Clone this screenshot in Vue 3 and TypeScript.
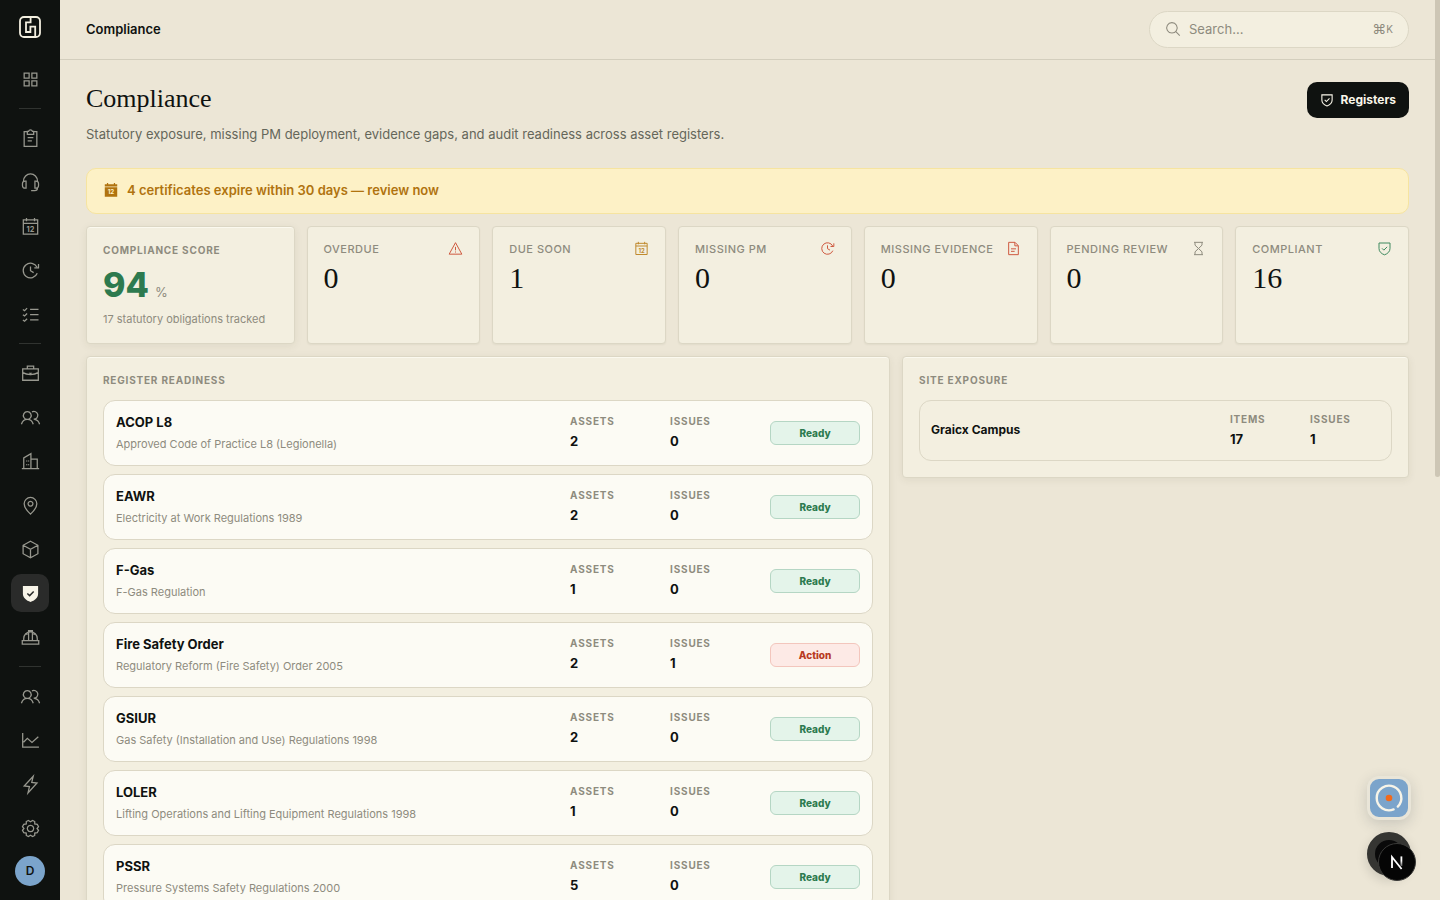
<script setup lang="ts">
interface Shape {
  d: string
  fill?: boolean
}
interface NavItem {
  icon: string
  label: string
  active?: boolean
}
interface Kpi {
  label: string
  value: number
  icon: string
  tone: string
}
interface Register {
  code: string
  name: string
  assets: number
  issues: number
}

const shapes: Record<string, Shape[]> = {
  grid: [{ d: 'M3 3h4.7v4.7H3zM10.3 3H15v4.7h-4.7zM3 10.3h4.7V15H3zM10.3 10.3H15V15h-4.7z' }],
  clipboard: [
    { d: 'M6 2.5H3V16.5H15V2.5H12' },
    { d: 'M6 2.2H7.2A1.9 1.9 0 0 1 10.8 2.2H12V5H6zM6.3 8.2h5.4M6.3 11.2h4' },
  ],
  headset: [
    { d: 'M2.4 8.5V7.5A6.6 6.6 0 0 1 15.6 7.5V8.5' },
    { d: 'M4.8 7.6v6.8H3.9A2.5 2.5 0 0 1 1.4 12V10a2.4 2.4 0 0 1 2.4-2.4zM13.2 7.6v6.8h.9A2.5 2.5 0 0 0 16.6 12V10a2.4 2.4 0 0 0-2.4-2.4zM15.6 14.2c0 1.7-1 2.5-2.6 2.5H9.6' },
  ],
  calendar: [{ d: 'M2.2 2.8h13.6v13.4H2.2zM2.2 6h13.6M5.2 1v3M12.8 1v3' }],
  calendarSolid: [{ d: 'M2 2.4H4.4V1H5.8V2.4H12.2V1H13.6V2.4H16V5H2zM2 6H16V16.6H2z', fill: true }],
  history: [
    { d: 'M15.4 11.6A6.9 6.9 0 1 1 15.2 6' },
    { d: 'M16.6 2.8V6.6H12.6M9 5.2V9.2L12 11' },
  ],
  checklist: [{ d: 'M8.6 4.2H16.6M8.6 9.2H16.6M8.6 14.2H16.6M1.8 4.2L3.4 5.4 5.8 3M1.8 9.2L3.4 10.4 5.8 8M1.8 14.2L3.4 15.4 5.8 13' }],
  briefcase: [
    { d: 'M1.6 4.6H16.4V15.4H1.6zM6 4.4V2H12V4.4M1.8 8.2C5.6 10.6 12.4 10.6 16.2 8.2' },
    { d: 'M7.4 8.4H10.6L9 10.6z', fill: true },
  ],
  users: [{ d: 'M6 3.4A3.7 3.7 0 1 1 5.9 3.4zM.4 15.4C1.4 12 4 10.8 6 10.8S10.6 12 11.6 15.4M10.4 3.7A3.7 3.7 0 1 1 12 10.6M12.6 10.8C14.8 11 16.8 12.4 17.6 15.4' }],
  building: [{ d: 'M.8 15.8H17.2M2.6 15.6V5.6L9.4 1.6V15.6M9.4 6.8H15.4V15.6M5.4 8V9M5.4 11.6V12.6M7.2 8V9M7.2 11.6V12.6' }],
  pin: [
    { d: 'M9 17.2C5.6 14 3 11 3 7.4A6 6 0 0 1 15 7.4C15 11 12.4 14 9 17.2z' },
    { d: 'M9 5A2.3 2.3 0 1 1 8.99 5z' },
  ],
  cube: [{ d: 'M9 1.2L16 5V13L9 16.8 2 13V5zM2 5L9 8.8 16 5M9 8.8V16.8' }],
  shieldSolid: [{ d: 'M1.8 2H16.2V9.2C16.2 13 13 15.6 9 17 5 15.6 1.8 13 1.8 9.2z', fill: true }],
  shield: [{ d: 'M2.4 2.4H15.6V9C15.6 12.8 12.8 15.2 9 16.6 5.2 15.2 2.4 12.8 2.4 9zM6 8.8L8.2 11 12.2 7' }],
  helmet: [{ d: 'M1.2 12H16.8V15.2H1.2zM2.6 12V10A6.4 6.4 0 0 1 15.4 10V12M7.2 12V2.6H10.8V12M5.6 4.8V6.6M12.4 4.8V6.6' }],
  chart: [{ d: 'M1.6 2V15.2H17M2.4 10.6L6 7 10.4 10.8 16.4 5.4' }],
  bolt: [{ d: 'M11.6 1.2L3 10.4 8 11 6.6 17 15.2 7.6 10.2 7z' }],
  gear: [
    { d: 'M7 1.4L9 2.6L11 1.4L13 2.4V4.6L15.4 5L16.6 7.2L15.2 9L16.6 10.8L15.4 13L13 13.4V15.6L11 16.6L9 15.4L7 16.6L5 15.6V13.4L2.6 13L1.4 10.8L2.8 9L1.4 7.2L2.6 5L5 4.6V2.4z' },
    { d: 'M9 6A3 3 0 1 1 8.99 6z' },
  ],
  warning: [{ d: 'M9 2L16.6 15.8H1.4zM9 7V11.2M9 12.6V13.8' }],
  file: [{ d: 'M3.2 1.6H10.8L14.8 5.6V16.4H3.2zM10.6 1.8V5.8H14.6M6 9.4H12M6 12.4H10.4' }],
  hourglass: [{ d: 'M3.6 1.6H14.4M3.6 16.4H14.4M4.8 1.8V5L9 9 13.2 5V1.8M4.8 16.2V13L9 9 13.2 13V16.2' }],
  search: [{ d: 'M7.8 1.8A5.9 5.9 0 1 1 7.79 1.8zM12.2 12L16.6 16.4' }],
}

const groups: NavItem[][] = [
  [{ icon: 'grid', label: 'Dashboard' }],
  [
    { icon: 'clipboard', label: 'Work orders' },
    { icon: 'headset', label: 'Helpdesk' },
    { icon: 'calendar', label: 'Planner' },
    { icon: 'history', label: 'Maintenance' },
    { icon: 'checklist', label: 'Tasks' },
  ],
  [
    { icon: 'briefcase', label: 'Contracts' },
    { icon: 'users', label: 'Clients' },
    { icon: 'building', label: 'Buildings' },
    { icon: 'pin', label: 'Sites' },
    { icon: 'cube', label: 'Assets' },
    { icon: 'shieldSolid', label: 'Compliance', active: true },
    { icon: 'helmet', label: 'Contractors' },
  ],
  [
    { icon: 'users', label: 'Team' },
    { icon: 'chart', label: 'Reports' },
    { icon: 'bolt', label: 'Automations' },
    { icon: 'gear', label: 'Settings' },
  ],
]

const kpis: Kpi[] = [
  { label: 'Overdue', value: 0, icon: 'warning', tone: 'red' },
  { label: 'Due soon', value: 1, icon: 'calendar', tone: 'amber' },
  { label: 'Missing PM', value: 0, icon: 'history', tone: 'red' },
  { label: 'Missing evidence', value: 0, icon: 'file', tone: 'red' },
  { label: 'Pending review', value: 0, icon: 'hourglass', tone: 'grey' },
  { label: 'Compliant', value: 16, icon: 'shield', tone: 'green' },
]

const registers: Register[] = [
  { code: 'ACOP L8', name: 'Approved Code of Practice L8 (Legionella)', assets: 2, issues: 0 },
  { code: 'EAWR', name: 'Electricity at Work Regulations 1989', assets: 2, issues: 0 },
  { code: 'F-Gas', name: 'F-Gas Regulation', assets: 1, issues: 0 },
  { code: 'Fire Safety Order', name: 'Regulatory Reform (Fire Safety) Order 2005', assets: 2, issues: 1 },
  { code: 'GSIUR', name: 'Gas Safety (Installation and Use) Regulations 1998', assets: 2, issues: 0 },
  { code: 'LOLER', name: 'Lifting Operations and Lifting Equipment Regulations 1998', assets: 1, issues: 0 },
  { code: 'PSSR', name: 'Pressure Systems Safety Regulations 2000', assets: 5, issues: 0 },
]
</script>

<template>
  <div class="app">
    <aside class="sidebar">
      <a class="logo" href="#" aria-label="Home">
        <svg viewBox="0 0 22 22" fill="none" stroke="currentColor" stroke-width="1.8">
          <rect x="1" y="1" width="20" height="20" rx="4" />
          <path d="M11.6 1.5V6.4H7V16H11.4V10.6H16.2V20.5" />
        </svg>
      </a>
      <nav class="nav" aria-label="Main">
        <div v-for="(group, g) in groups" :key="g" class="nav-group">
          <a
            v-for="item in group"
            :key="item.label"
            href="#"
            class="nav-item"
            :class="{ active: item.active }"
            :aria-label="item.label"
          >
            <svg class="icon" viewBox="0 0 18 18">
              <path v-for="s in shapes[item.icon]" :key="s.d" :d="s.d" :class="{ solid: s.fill }" />
              <path v-if="item.icon === 'shieldSolid'" class="tick" d="M6 9L8.2 11 12 7.2" />
              <text v-if="item.icon === 'calendar'" x="9" y="14" class="day">12</text>
            </svg>
          </a>
        </div>
      </nav>
      <button class="avatar" type="button" aria-label="Account">D</button>
    </aside>

    <div class="page">
      <header class="topbar">
        <span class="crumb">Compliance</span>
        <label class="search">
          <svg class="icon" viewBox="0 0 18 18"><path v-for="s in shapes.search" :key="s.d" :d="s.d" /></svg>
          <input type="text" placeholder="Search..." aria-label="Search" />
          <kbd><span class="cmd">⌘</span>K</kbd>
        </label>
      </header>

      <main class="content">
        <div class="heading">
          <div>
            <h1>Compliance</h1>
            <p>Statutory exposure, missing PM deployment, evidence gaps, and audit readiness across asset registers.</p>
          </div>
          <button class="primary" type="button">
            <svg class="icon" viewBox="0 0 18 18"><path v-for="s in shapes.shield" :key="s.d" :d="s.d" /></svg>
            Registers
          </button>
        </div>

        <a class="banner" href="#">
          <svg class="icon" viewBox="0 0 18 18">
            <path v-for="s in shapes.calendarSolid" :key="s.d" :d="s.d" class="solid" />
            <text x="9" y="14" class="day light">12</text>
          </svg>
          4 certificates expire within 30 days — review now
        </a>

        <section class="kpis">
          <article class="card raised score">
            <h2 class="overline">Compliance score</h2>
            <div class="score-value"><strong>94</strong><span>%</span></div>
            <p>17 statutory obligations tracked</p>
          </article>
          <article v-for="k in kpis" :key="k.label" class="card kpi">
            <div class="kpi-head">
              <h2>{{ k.label }}</h2>
              <svg class="icon" :class="k.tone" viewBox="0 0 18 18">
                <path v-for="s in shapes[k.icon]" :key="s.d" :d="s.d" />
                <text v-if="k.icon === 'calendar'" x="9" y="14" class="day">12</text>
              </svg>
            </div>
            <div class="kpi-value">{{ k.value }}</div>
          </article>
        </section>

        <div class="panels">
          <section class="card raised panel">
            <h2 class="overline">Register readiness</h2>
            <article v-for="r in registers" :key="r.code" class="row register">
              <div class="row-title">
                <h3>{{ r.code }}</h3>
                <p>{{ r.name }}</p>
              </div>
              <div class="stat"><span>Assets</span><b>{{ r.assets }}</b></div>
              <div class="stat"><span>Issues</span><b>{{ r.issues }}</b></div>
              <span class="pill" :class="{ action: r.issues > 0 }">{{ r.issues > 0 ? 'Action' : 'Ready' }}</span>
            </article>
          </section>

          <section class="card raised panel">
            <h2 class="overline">Site exposure</h2>
            <article class="row site">
              <h3>Graicx Campus</h3>
              <div class="stat"><span>Items</span><b>17</b></div>
              <div class="stat"><span>Issues</span><b>1</b></div>
            </article>
          </section>
        </div>
      </main>
    </div>

    <div class="scrollbar" aria-hidden="true"><div class="thumb"></div></div>

    <div class="floating">
      <button class="assistant" type="button" aria-label="Assistant">
        <svg viewBox="0 0 38 38" fill="none">
          <path d="M23.6 30.4A12.3 12.3 0 1 1 27.8 27.6" stroke="#f7f4e8" stroke-width="2.4" stroke-linecap="round" />
          <circle cx="19" cy="19" r="3.3" fill="#f26a1b" />
        </svg>
      </button>
      <div class="dev">
        <button class="record" type="button" aria-label="Record"></button>
        <button class="next" type="button" aria-label="Developer tools">
          <svg viewBox="0 0 36 36" fill="none">
            <defs>
              <linearGradient id="fade" x1="0" y1="12" x2="0" y2="24" gradientUnits="userSpaceOnUse">
                <stop offset="0.4" stop-color="#fff" />
                <stop offset="1" stop-color="#fff" stop-opacity="0.1" />
              </linearGradient>
            </defs>
            <path d="M13 24V13L22.6 25" stroke="#fff" stroke-width="1.8" />
            <path d="M22.4 12.4V22" stroke="url(#fade)" stroke-width="1.8" />
          </svg>
        </button>
      </div>
    </div>
  </div>
</template>

<style>
body {
  margin: 0;
  overflow: hidden;
}
</style>

<style scoped>
.app {
  --ink: #0f1210;
  --muted: #8e8b7e;
  --line: #dcd7c5;
  --card: #f3efe0;
  --green: #2d7a4f;
  position: relative;
  display: grid;
  grid-template-columns: 60px minmax(0, 1fr) 5px;
  grid-template-rows: minmax(0, 1fr);
  height: 100vh;
  overflow: hidden;
  background: #ece6d6;
  color: var(--ink);
  font-family: Inter, "Liberation Sans", sans-serif;
  font-size: 13px;
  line-height: 20px;
}
* {
  box-sizing: border-box;
}
h1,
h2,
h3,
p {
  margin: 0;
}
a {
  color: inherit;
  text-decoration: none;
}
button,
input,
kbd {
  font: inherit;
  color: inherit;
}
button {
  border: 0;
  padding: 0;
  cursor: pointer;
}
.icon {
  flex: none;
  width: 18px;
  height: 18px;
  fill: none;
  stroke: currentColor;
  stroke-width: 1.2;
  overflow: visible;
}
.solid {
  fill: currentColor;
  stroke: none;
}
.day {
  fill: currentColor;
  stroke: none;
  font-size: 7px;
  font-weight: 700;
  text-anchor: middle;
}
.day.light {
  fill: #fdf1c6;
}
.tick {
  stroke: #2a2b2a;
  stroke-width: 1.4;
}

.sidebar {
  display: flex;
  flex-direction: column;
  align-items: center;
  padding: 16px 0 14px;
  background: var(--ink);
  color: #98988f;
}
.logo {
  color: #f3efe0;
}
.logo svg {
  display: block;
  width: 22px;
  height: 22px;
}
.nav {
  flex: 1;
  padding-top: 22px;
}
.nav-group {
  display: flex;
  flex-direction: column;
  align-items: center;
  gap: 6px;
}
.nav-group + .nav-group::before {
  content: "";
  width: 22px;
  height: 1px;
  margin: 10px 0 4px;
  background: #303330;
}
.nav-item {
  display: grid;
  place-items: center;
  width: 38px;
  height: 38px;
  border-radius: 10px;
}
.nav-item .icon {
  width: 19px;
  height: 19px;
}
.nav-item.active {
  background: #2a2b2a;
  color: #f7f4e8;
}
.avatar {
  width: 30px;
  height: 30px;
  border-radius: 50%;
  background: #7ba4cb;
  color: var(--ink);
  font-size: 12px;
  font-weight: 600;
}

.topbar {
  display: flex;
  align-items: center;
  justify-content: space-between;
  height: 60px;
  padding: 0 26px;
  border-bottom: 1px solid #d3cebd;
}
.crumb {
  padding-bottom: 1px;
  font-weight: 600;
}
.search {
  display: flex;
  align-items: center;
  gap: 8px;
  width: 260px;
  height: 37px;
  padding: 0 15px 1px;
  border: 1px solid var(--line);
  border-radius: 19px;
  background: var(--card);
  color: var(--muted);
}
.search .icon {
  width: 16px;
  height: 16px;
}
.search input {
  flex: 1;
  min-width: 0;
  border: 0;
  padding: 0;
  outline: 0;
  background: none;
}
.search input::placeholder {
  color: var(--muted);
  opacity: 1;
}
.search kbd {
  display: flex;
  align-items: center;
  font-size: 10px;
}
.cmd {
  font-size: 14px;
}

.content {
  display: flex;
  flex-direction: column;
  gap: 12px;
  padding: 22px 26px;
}
.heading {
  display: flex;
  align-items: flex-start;
  justify-content: space-between;
  padding-bottom: 12px;
}
h1 {
  font-family: "Liberation Serif", serif;
  font-size: 26px;
  font-weight: 400;
  line-height: 34px;
}
.heading p {
  margin-top: 8px;
  color: #65665a;
}
.primary {
  display: flex;
  align-items: center;
  gap: 7px;
  height: 36px;
  padding: 0 13px;
  border-radius: 10px;
  background: var(--ink);
  color: #faf7ea;
  font-size: 12px;
  font-weight: 700;
}
.primary .icon {
  width: 14px;
  height: 14px;
  stroke-width: 1.4;
}
.banner {
  display: flex;
  align-items: center;
  gap: 8px;
  height: 46px;
  padding: 0 16px 2px;
  border: 1px solid #f6e4a0;
  border-radius: 10px;
  background: #fdf1c6;
  color: #b0730f;
  font-weight: 600;
}
.banner .icon {
  width: 16px;
  height: 16px;
}

.card {
  border: 1px solid var(--line);
  border-radius: 4px;
  background: var(--card);
  box-shadow: 0 1px 2px rgba(60, 55, 30, 0.06);
}
.raised {
  box-shadow: inset 0 1px 0 #fbf9ef, 0 2px 8px rgba(60, 55, 30, 0.07);
}
.overline {
  color: var(--muted);
  font-size: 10px;
  font-weight: 700;
  line-height: 14px;
  letter-spacing: 0.08em;
  text-transform: uppercase;
}
.kpis {
  display: grid;
  grid-template-columns: 1.2fr repeat(6, minmax(0, 1fr));
  gap: 12px;
}
.score {
  padding: 16px;
}
.score-value {
  display: flex;
  align-items: baseline;
  gap: 6px;
  height: 38px;
  margin: 9px 0 7px;
  line-height: 38px;
}
.score-value strong {
  color: var(--green);
  font-size: 34px;
  font-weight: 800;
}
.score-value span {
  color: var(--muted);
  font-size: 13px;
}
.score p {
  color: var(--muted);
  font-size: 11px;
  line-height: 16px;
}
.kpi {
  padding: 14px 16px;
}
.kpi-head {
  display: flex;
  align-items: flex-start;
  justify-content: space-between;
  color: var(--muted);
}
.kpi-head h2 {
  font-size: 11px;
  font-weight: 500;
  line-height: 16px;
  letter-spacing: 0.5px;
  text-transform: uppercase;
  white-space: nowrap;
}
.kpi-head .icon {
  width: 15px;
  height: 15px;
}
.kpi-value {
  margin-top: 4px;
  font-family: "Liberation Serif", serif;
  font-size: 30px;
  line-height: 34px;
}
.red {
  color: #cf5a40;
}
.amber {
  color: #c08a2e;
}
.grey {
  color: #8e8b7e;
}
.green {
  color: #3f8a5f;
}

.panels {
  display: grid;
  grid-template-columns: minmax(0, 46fr) minmax(0, 29fr);
  align-items: start;
  gap: 12px;
}
.panel {
  display: flex;
  flex-direction: column;
  gap: 8px;
  padding: 16px;
}
.panel .overline {
  margin-bottom: 5px;
}
.row {
  display: grid;
  align-items: center;
  gap: 10px;
  padding: 0 12px;
  border: 1px solid var(--line);
  border-radius: 12px;
}
.register {
  grid-template-columns: minmax(0, 1fr) 90px 90px 90px;
  height: 66px;
  background: #fcfbf4;
}
.site {
  grid-template-columns: minmax(0, 1fr) 70px 70px;
  height: 61px;
  padding: 0 11px;
}
h3 {
  font-size: 13px;
  font-weight: 700;
  line-height: 20px;
}
.site h3 {
  padding-bottom: 2px;
  font-size: 12px;
}
.row-title p {
  margin-top: 2px;
  color: var(--muted);
  font-size: 11px;
}
.stat {
  display: grid;
  gap: 2px;
  padding-bottom: 2px;
}
.stat span {
  color: var(--muted);
  font-size: 10px;
  font-weight: 700;
  line-height: 16px;
  letter-spacing: 0.08em;
  text-transform: uppercase;
}
.stat b {
  font-weight: 700;
}
.pill {
  height: 24px;
  border: 1px solid #b5d6c4;
  border-radius: 6px;
  background: #e4f4ea;
  color: var(--green);
  font-size: 10px;
  font-weight: 800;
  line-height: 22px;
  text-align: center;
}
.pill.action {
  border-color: #f3c6bd;
  background: #fdeae6;
  color: #b83a22;
}

.thumb {
  height: 53vh;
  border-radius: 0 0 3px 3px;
  background: #cdc6b5;
}

.floating {
  position: absolute;
  right: 24px;
  bottom: 19px;
  display: flex;
  flex-direction: column;
  gap: 12px;
}
.assistant {
  width: 44px;
  height: 44px;
  border: 3px solid #e9e5d8;
  border-radius: 12px;
  background: #7ba4cb;
  box-shadow: 0 4px 14px rgba(60, 70, 80, 0.2);
}
.assistant svg,
.next svg {
  display: block;
}
.dev {
  position: relative;
  width: 49px;
  height: 49px;
}
.record {
  width: 44px;
  height: 44px;
  border: 8px solid #353532;
  border-radius: 50%;
  background: #0a0a0a;
  box-shadow: 0 4px 12px rgba(0, 0, 0, 0.15);
}
.next {
  position: absolute;
  right: 0;
  bottom: 0;
  width: 38px;
  height: 38px;
  border: 1px solid #3a3a38;
  border-radius: 50%;
  background: #050505;
}
</style>
